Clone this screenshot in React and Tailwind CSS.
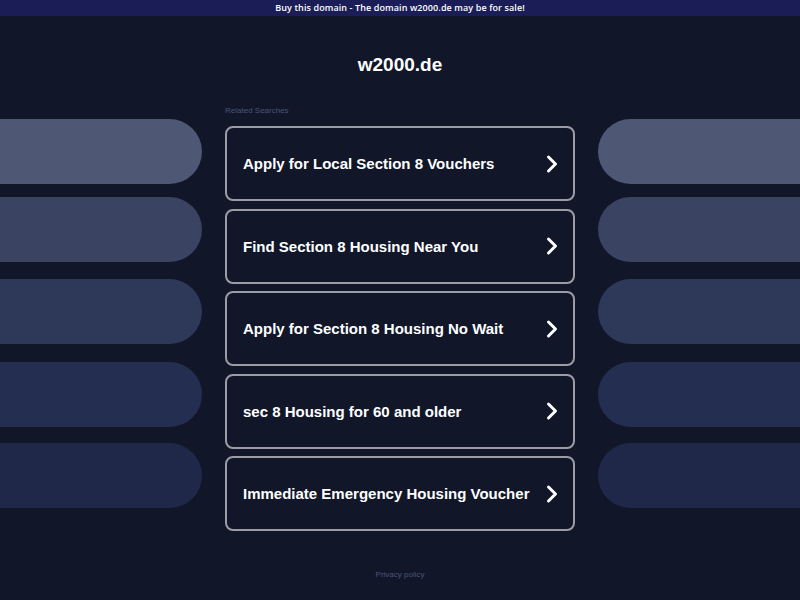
import React from "react";

const searches = [
  "Apply for Local Section 8 Vouchers",
  "Find Section 8 Housing Near You",
  "Apply for Section 8 Housing No Wait",
  "sec 8 Housing for 60 and older",
  "Immediate Emergency Housing Voucher",
];

// decorative side pills: colour and spacing above each one
const pills = [
  { color: "bg-[#4e5773]", gap: "mt-0" },
  { color: "bg-[#3a4362]", gap: "mt-[13px]" },
  { color: "bg-[#2e3859]", gap: "mt-[17px]" },
  { color: "bg-[#242e51]", gap: "mt-[18px]" },
  { color: "bg-[#1f2849]", gap: "mt-[16px]" },
];

function Chevron() {
  return (
    <svg width="14" height="20" viewBox="0 0 14 20" fill="none">
      <path d="M3.5 3 L10.5 10 L3.5 17" stroke="white" strokeWidth="3" strokeLinecap="round" strokeLinejoin="round" />
    </svg>
  );
}

function Pills({ side }) {
  return (
    <div className="flex flex-col pt-[16px] w-[202px] shrink-0">
      {pills.map((p, i) => (
        <div
          key={i}
          className={`h-[65px] ${p.color} ${p.gap} ${side === "left" ? "rounded-r-full" : "rounded-l-full"}`}
        />
      ))}
    </div>
  );
}

export default function App() {
  return (
    <div className="w-[800px] h-[600px] bg-[#111729] overflow-hidden flex flex-col" style={{ fontFamily: '"Liberation Sans", Arial, sans-serif' }}>
      <div className="h-[16px] bg-[#1b1e56] flex items-center justify-center">
        <span className="text-white text-[9px] font-semibold tracking-[0.1px]" style={{ fontFamily: '"Open Sans", sans-serif' }}>
          Buy this domain - The domain w2000.de may be for sale!
        </span>
      </div>
      <div className="mt-[35px] h-[28px] flex items-center justify-center">
        <h1 className="text-white text-[19px] font-bold leading-[28px]">w2000.de</h1>
      </div>
      <div className="mt-[24px] flex flex-row gap-[23px]">
        <Pills side="left" />
        <div className="w-[350px] shrink-0 flex flex-col">
          <div className="h-[16px] leading-[16px] text-[8px] text-[#4d5574] mb-[7px]">Related Searches</div>
          <div className="flex flex-col gap-[7.5px]">
            {searches.map((s) => (
              <div
                key={s}
                className="h-[75px] border-2 border-[#9c9ca6] rounded-[8px] flex items-center justify-between pl-[16px] pr-[14px]"
              >
                <span className="text-white text-[15px] font-bold whitespace-nowrap mt-[2px]">{s}</span>
                <Chevron />
              </div>
            ))}
          </div>
        </div>
        <Pills side="right" />
      </div>
      <div className="mt-[38px] text-center text-[8px] leading-[12px] text-[#4d5574]">Privacy policy</div>
    </div>
  );
}
